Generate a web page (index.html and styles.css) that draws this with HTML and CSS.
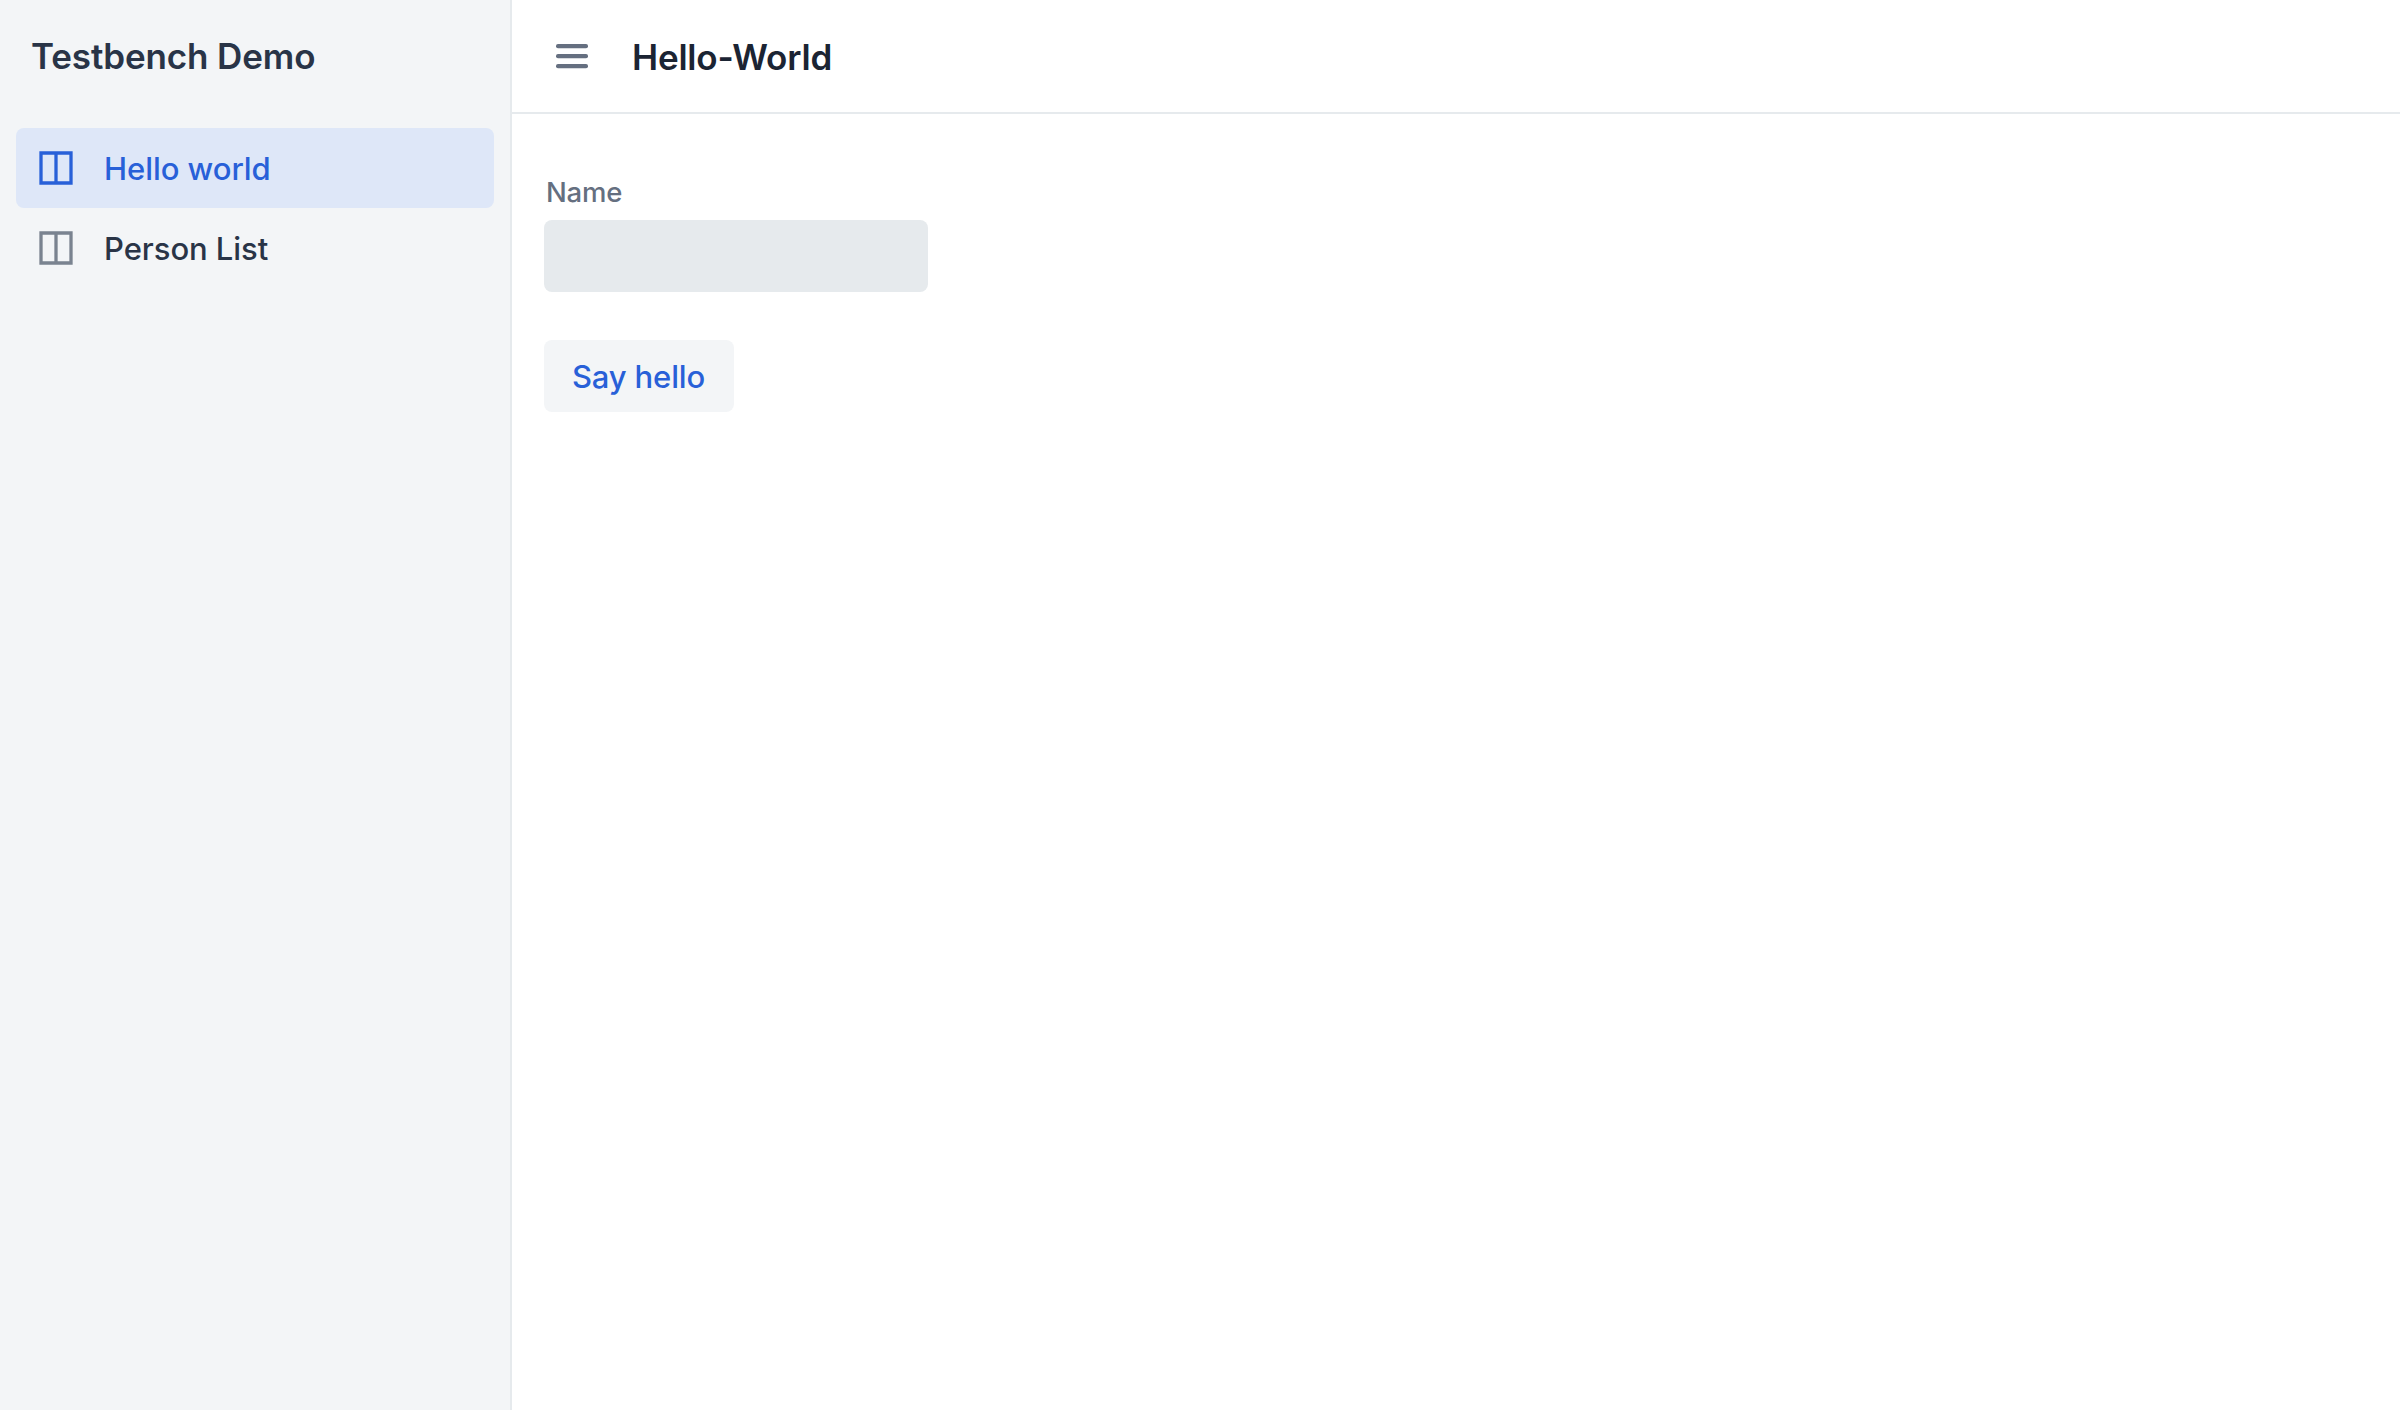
FILE: index.html
```html
<!DOCTYPE html>
<html lang="en">
<head>
<meta charset="utf-8">
<title>Hello-World</title>
<link rel="stylesheet" href="styles.css">
</head>
<body>
<div class="app">
  <aside class="drawer">
    <h2 class="app-name">Testbench Demo</h2>
    <nav class="nav">
      <a class="nav-item selected">
        <svg class="nav-icon" viewBox="0 0 34 34"><path d="M2 2H32V32H2ZM17 2V32"/></svg>
        <span class="nav-label">Hello world</span>
      </a>
      <a class="nav-item">
        <svg class="nav-icon" viewBox="0 0 34 34"><path d="M2 2H32V32H2ZM17 2V32"/></svg>
        <span class="nav-label">Person List</span>
      </a>
    </nav>
  </aside>
  <div class="page">
    <header class="navbar">
      <svg class="toggle" viewBox="0 0 32 25"><rect width="32" height="4.3" rx="2"/><rect y="10" width="32" height="4.3" rx="2"/><rect y="20" width="32" height="4.3" rx="2"/></svg>
      <h1 class="view-title">Hello-World</h1>
    </header>
    <main class="content">
      <label class="label" for="name">Name</label>
      <input class="field" id="name" type="text">
      <button class="button" type="button">Say hello</button>
    </main>
  </div>
</div>
</body>
</html>
```
FILE: styles.css
```css
* { box-sizing: border-box; }
body {
  margin: 0;
  font-family: Inter, "Liberation Sans", sans-serif;
  background: #fff;
  color: #1b2433;
}
.app { display: flex; height: 1410px; }
.drawer {
  width: 512px;
  flex: none;
  background: #f3f5f7;
  border-right: 2px solid #e6eaed;
}
.app-name {
  margin: 0;
  padding: 34px 0 0 31px;
  height: 128px;
  font-size: 35px;
  line-height: 45px;
  font-weight: 600;
  letter-spacing: -0.12px;
  color: #293447;
}
.nav { padding: 0 16px; }
.nav-item {
  display: flex;
  align-items: center;
  gap: 31px;
  height: 80px;
  padding-left: 23px;
  border-radius: 8px;
  font-size: 31px;
  line-height: 40px;
  font-weight: 500;
  letter-spacing: -0.05px;
  color: #293447;
}
.nav-label { padding-top: 2px; }
.nav-icon {
  width: 34px;
  height: 34px;
  fill: none;
  stroke: #7a8390;
  stroke-width: 3.3;
}
.selected { background: #dee7f8; color: #2860d8; }
.selected .nav-icon { stroke: #2860d8; }
.page { flex: 1; }
.navbar {
  display: flex;
  align-items: flex-start;
  height: 114px;
  padding: 44px 0 0 44px;
  border-bottom: 2px solid #e6eaed;
}
.toggle { width: 32px; height: 25px; fill: #656f80; }
.view-title {
  margin: -9px 0 0 44px;
  font-size: 35px;
  line-height: 45px;
  font-weight: 600;
  letter-spacing: -0.2px;
}
.content {
  display: flex;
  flex-direction: column;
  align-items: flex-start;
  padding: 62px 32px 0;
}
.label {
  height: 44px;
  padding-left: 2px;
  font-size: 27.5px;
  line-height: 32px;
  font-weight: 500;
  letter-spacing: -0.2px;
  color: #656f80;
}
.field {
  width: 384px;
  height: 72px;
  padding: 0 16px;
  border: 0;
  border-radius: 8px;
  background: #e6eaed;
  font: inherit;
}
.button {
  width: 190px;
  height: 72px;
  margin-top: 48px;
  padding: 2px 1px 0 0;
  border: 0;
  border-radius: 8px;
  background: #f3f5f7;
  color: #2860d8;
  font: 500 31px/40px Inter, "Liberation Sans", sans-serif;
  letter-spacing: -0.15px;
}
```
